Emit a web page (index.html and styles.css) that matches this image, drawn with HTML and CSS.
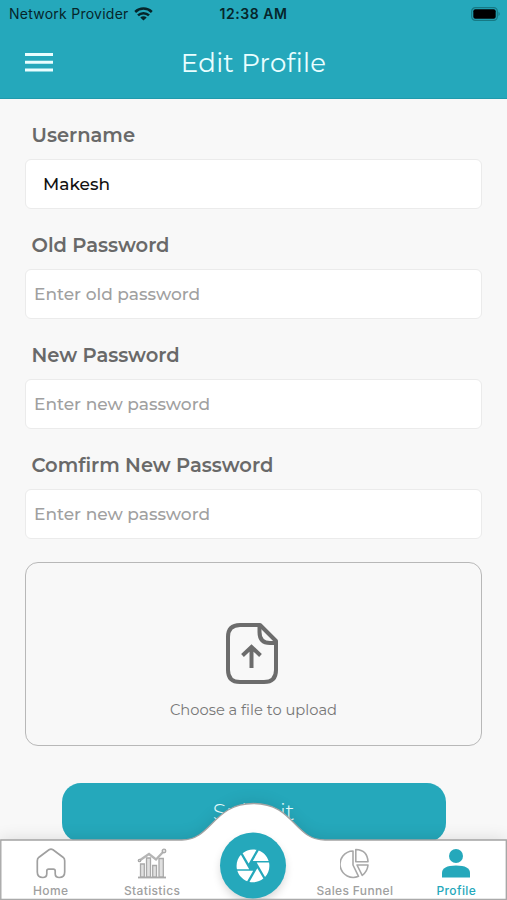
FILE: index.html
```html
<!DOCTYPE html>
<html lang="en">
<head>
<meta charset="utf-8">
<meta name="viewport" content="width=device-width, initial-scale=1">
<title>Edit Profile</title>
<link rel="stylesheet" href="styles.css">
</head>
<body>
<div class="screen">
  <header class="header">
    <div class="status">
      <div class="carrier"><span>Network Provider</span>
        <svg width="19" height="14" viewBox="0 0 19 14" fill="none" stroke="#06252a" stroke-width="2.5"><path d="M1.2 5a11.8 11.8 0 0 1 16.600 0M4 8.400a7.800 7.800 0 0 1 11 0"/><path d="M9.500 13.500 6.300 10.600a4.500 4.500 0 0 1 6.400 0Z" fill="#06252a" stroke="none"/></svg>
      </div>
      <div class="time">12:38 AM</div>
      <svg class="battery" width="30" height="14" viewBox="0 0 30 14"><rect x=".7" y=".7" width="25.6" height="12.6" rx="3.6" fill="none" stroke="#167984" stroke-width="1.2"/><rect x="2.3" y="2.3" width="22.4" height="9.4" rx="2"/><path d="M27.500 4.800q2.500 2.200 0 4.400Z" fill="#167984"/></svg>
    </div>
    <div class="titlebar">
      <svg class="menu" width="28" height="20" viewBox="0 0 28 20" fill="#e9feff"><path d="M0 0h28v3H0zM0 7.800h28v3H0zM0 15.600h28v3H0z"/></svg>
      <h1 class="title">Edit Profile</h1>
    </div>
  </header>
  <main class="form">
    <div class="field"><div class="label">Username</div><div class="input filled"><span class="value">Makesh</span></div></div>
    <div class="field"><div class="label">Old Password</div><div class="input"><span class="hint">Enter old password</span></div></div>
    <div class="field"><div class="label">New Password</div><div class="input"><span class="hint">Enter new password</span></div></div>
    <div class="field"><div class="label">Comfirm New Password</div><div class="input"><span class="hint">Enter new password</span></div></div>
    <div class="upload">
      <svg class="upload-icon" width="54" height="63" viewBox="0 0 54 63" fill="none" stroke="#6c6c6c" stroke-width="4" stroke-linejoin="round"><path d="M35 3H15Q3 3 3 15v33Q3 60 15 60h24q12 0 12-12V19Z"/><path d="M34.500 3v7q0 11 10.500 11h6"/><path d="M26.500 46V25M17.500 33.500l9-8.500 9 8.500" stroke-linejoin="miter"/></svg>
      <span class="upload-text">Choose a file to upload</span>
    </div>
    <div class="submit"><span>Submit</span></div>
  </main>
  <nav class="tabs">
    <svg class="tabs-bg" width="507" height="117" viewBox="0 0 507 117">
      <defs><filter id="sh" x="-10%" y="-50%" width="120%" height="200%"><feGaussianBlur stdDeviation="9"/></filter>
      <filter id="disc" x="-30%" y="-30%" width="160%" height="160%"><feGaussianBlur stdDeviation="5"/></filter></defs>
      <path d="M0 57H184C216 57 213 21 253 21S292 57 323 57H507V117H0Z" fill="#000" opacity=".13" filter="url(#sh)"/>
      <path d="M.8 57H182C212 57 213 20.500 253.500 20.500S294 57 325 57H506.300V116.500H.8Z" fill="#fff" stroke="#a3a3a3" stroke-width="1.300"/>
      <circle cx="253" cy="87" r="32" opacity=".17" filter="url(#disc)"/>
      <path d="M0 116.500H507" stroke="#aaa"/>
      <circle cx="253" cy="82.500" r="33" fill="#25a8bb"/>
      <path transform="translate(233.300 63.200) scale(1.640)" fill="#fff" d="M9.400 10.500l4.770-8.260C13.470 2.090 12.750 2 12 2c-2.400 0-4.600.850-6.320 2.250l3.660 6.350.060-.100zM21.540 9c-.920-2.920-3.150-5.260-6-6.340L11.880 9h9.660zm.260 1h-7.490l.290.500 4.760 8.250C21 16.970 22 14.610 22 12c0-.690-.070-1.350-.200-2zM8.540 12l-3.900-6.750C3.010 7.030 2 9.390 2 12c0 .690.070 1.350.200 2h7.490l-1.150-2zm-6.080 3c.920 2.920 3.150 5.260 6 6.340L12.120 15H2.460zm11.270 0l-3.900 6.760c.700.150 1.420.240 2.170.240 2.400 0 4.600-.850 6.320-2.250l-3.660-6.350-.930 1.600z"/>
    </svg>
    <div class="tab-row">
      <div class="tab"><svg width="30" height="31" viewBox="0 0 30 31" fill="none" stroke="#a0a0a0" stroke-width="1.700"><path d="M13 1.700Q15 .4 17 1.700L27 9.200q1.700 1.400 1.700 3.500V24q0 5.500-5.500 5.500-4 0-4-4V23q0-1.800-1.800-1.800h-4.800Q10.800 21.200 10.800 23v2.500q0 4-4 4-5.500 0-5.500-5.500V12.700q0-2.100 1.700-3.500Z"/></svg><span>Home</span></div>
      <div class="tab"><svg width="30" height="31" viewBox="0 0 30 31" fill="#e0e0e0" stroke="#a9a9a9" stroke-width="1.300"><path d="M1 29.500h28" stroke-width="1.800"/><path d="M3.500 16h3.800v13H3.500zM9.500 10h4v19h-4zM15.700 17.500h3.800v11.500h-3.800zM22 10.500h4.300v18.500H22z"/><path d="M2.500 12.500 12 6l7 5.500 8-8.500" fill="none" stroke="#b5b5b5" stroke-width="2.300"/><circle cx="2.500" cy="12.500" r="1.200"/><circle cx="27" cy="3" r="1.800"/></svg><span>Statistics</span></div>
      <div class="tab"></div>
      <div class="tab"><svg width="30" height="31" viewBox="0 0 30 31" fill="none" stroke="#a8a8a8" stroke-width="1.600" stroke-linejoin="round"><path d="M13 3v14L18.500 28.300A13.200 13.200 0 1 1 13 3Z"/><path d="M15.800 1.500Q27.500 2 28 13.800H15.800ZM17 17H28Q27.500 23.500 22.200 27.300Z"/></svg><span>Sales Funnel</span></div>
      <div class="tab active"><svg width="30" height="31" viewBox="0 0 30 31" fill="#25a8bb"><circle cx="15" cy="8" r="7"/><path d="M1 29.500V25Q1 17.500 15 17.500T29 25v4.500Z"/></svg><span>Profile</span></div>
    </div>
  </nav>
</div>
</body>
</html>
```
FILE: styles.css
```css
* { box-sizing: border-box; }
body { margin: 0; font-family: Montserrat, Inter, sans-serif; }
.screen { position: relative; width: 507px; height: 900px; overflow: hidden; background: #f8f8f8; }
.header { height: 98.500px; background: #25a8bb; border-bottom: 1px solid #209aac; }
.status { display: grid; grid-template-columns: 1fr auto 1fr; align-items: center; height: 27px; padding: 0 6px 0 9px; color: #06252a; font-family: Inter, sans-serif; }
.carrier { display: flex; align-items: center; gap: 5px; font-size: 14px; letter-spacing: .25px; white-space: nowrap; }
.time { margin-right: 3px; font-size: 14px; font-weight: 600; letter-spacing: .55px; }
.battery { justify-self: end; }
.titlebar { display: grid; grid-template-columns: 1fr auto 1fr; align-items: center; height: 71px; padding: 0 25px; }
.title { margin: 0; font-size: 26px; font-weight: 400; letter-spacing: .3px; color: #e9feff; white-space: nowrap; }
.form { padding: 22.500px 25px 0; }
.field { height: 110px; }
.label { display: flex; align-items: center; height: 28px; margin: 0 0 10px 6.500px; font-size: 19.500px; font-weight: 600; color: #696969; white-space: nowrap; }
.input { display: flex; align-items: center; height: 50px; padding-left: 8px; background: #fff; border: 1px solid #ebebeb; border-radius: 6px; font-size: 17px; white-space: nowrap; }
.filled { padding-left: 17px; }
.value { color: #111; font-weight: 500; }
.hint { color: #a0a0a0; font-weight: 500; }
.upload { display: flex; flex-direction: column; align-items: center; height: 184px; margin-top: 1px; padding-top: 59px; border: 1.500px solid #b8b8b8; border-radius: 13px; }
.upload-icon { margin-right: 3px; }
.upload-text { margin-top: 14.500px; font-size: 14.700px; line-height: 20px; color: #777; }
.submit { display: flex; align-items: center; justify-content: center; width: 384px; height: 59px; margin: 36.500px auto 0; border-radius: 19px; background: #25a8bb; color: #e9feff; font-size: 22.300px; font-weight: 300; }
.tabs { position: absolute; left: 0; bottom: 0; width: 507px; height: 117px; padding-top: 65px; }
.tabs-bg { position: absolute; left: 0; top: 0; overflow: visible; }
.tab-row { position: relative; display: grid; grid-template-columns: repeat(5, 1fr); }
.tab { display: flex; flex-direction: column; align-items: center; gap: 4px; color: #a0a0a0; font-family: Inter, sans-serif; font-size: 12px; font-weight: 500; line-height: 16px; letter-spacing: .35px; white-space: nowrap; }
.active { color: #25a8bb; }
```
